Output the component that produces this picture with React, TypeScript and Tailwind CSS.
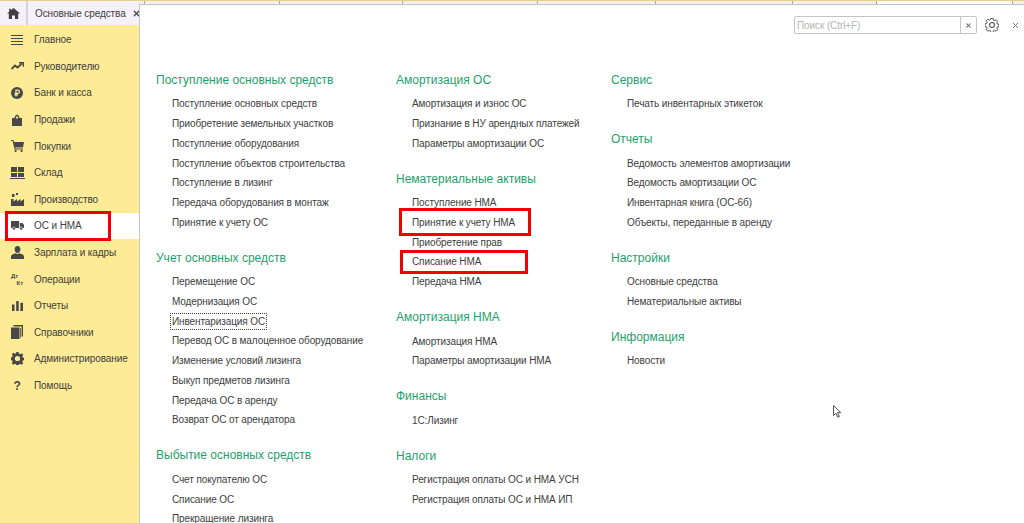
import { ReactNode } from "react";
import { X } from "lucide-react";

const iconColor = "#484848";

const GearPath =
  "M6.2 0h2.6l.4 2 1.3.6 1.8-1.1 1.8 1.8-1.1 1.8.6 1.3 2 .4v2.6l-2 .4-.6 1.3 1.1 1.8-1.8 1.8-1.8-1.1-1.3.6-.4 2H6.2l-.4-2-1.3-.6-1.8 1.1-1.8-1.8 1.1-1.8-.6-1.3-2-.4V6.2l2-.4.6-1.3-1.1-1.8 1.8-1.8 1.8 1.1 1.3-.6z";

const sideItems: { label: string; icon: ReactNode; active?: boolean }[] = [
  {
    label: "Главное",
    icon: (
      <svg width="12" height="10" viewBox="0 0 12 10" stroke={iconColor} strokeWidth="1">
        <path d="M0 .5h12M0 3.5h12M0 6.5h12M0 9.5h12" />
      </svg>
    ),
  },
  {
    label: "Руководителю",
    icon: (
      <svg width="13" height="8" viewBox="0 0 13 8" fill="none" stroke={iconColor} strokeWidth="1.8">
        <path d="M.5 7l3.5-3.5 2.5 2L11 1.5" />
        <path d="M8 .8h4.4v4" strokeWidth="1.4" />
      </svg>
    ),
  },
  {
    label: "Банк и касса",
    icon: (
      <svg width="12" height="12" viewBox="0 0 14 14">
        <circle cx="7" cy="7" r="7" fill={iconColor} />
        <path d="M5.8 11V3.6h2.1a1.9 1.9 0 0 1 0 3.9H4.2M4.2 9.2h4" fill="none" stroke="#feeb96" strokeWidth="1.4" />
      </svg>
    ),
  },
  {
    label: "Продажи",
    icon: (
      <svg width="10" height="12" viewBox="0 0 10 12">
        <path d="M0 4h2.4l1-2.5C3.8.4 6.2.4 6.6 1.5l1 2.5H10v8H0z" fill={iconColor} />
        <path d="M3.8 4.6l.7-2.4h1l.7 2.4z" fill="#feeb96" />
      </svg>
    ),
  },
  {
    label: "Покупки",
    icon: (
      <svg width="13" height="12" viewBox="0 0 13 12" fill={iconColor}>
        <path d="M0 0h2.4l.6 2H13l-1 5.5H4.2l.3 1H12v1H3.6L1.6 1H0z" />
        <circle cx="4.6" cy="10.9" r="1.1" />
        <circle cx="10.6" cy="10.9" r="1.1" />
      </svg>
    ),
  },
  {
    label: "Склад",
    icon: (
      <svg width="15" height="12" viewBox="0 0 15 12" fill={iconColor}>
        <rect x="1" y="0" width="6" height="5" />
        <rect x="8" y="0" width="6" height="5" />
        <rect x="1" y="6" width="6" height="4" />
        <rect x="8" y="6" width="6" height="4" />
        <rect x="0" y="11" width="15" height="1" />
      </svg>
    ),
  },
  {
    label: "Производство",
    icon: (
      <svg width="13" height="13" viewBox="0 0 13 13" fill={iconColor}>
        <path d="M0 13V6h2.5v2.5L6 6v2.5L9.5 6v2.5L13 6v7zM1 1h2.5v3H1zM5 0h2v2H5z" />
      </svg>
    ),
  },
  {
    label: "ОС и НМА",
    active: true,
    icon: (
      <svg width="13" height="9" viewBox="0 0 13 9" fill={iconColor}>
        <path d="M0 0h8.2v7H0zM9 2h2.4L13 4v3H9z" />
        <circle cx="3" cy="7.5" r="1.5" stroke="#fff" strokeWidth=".6" />
        <circle cx="10.2" cy="7.5" r="1.5" stroke="#fff" strokeWidth=".6" />
      </svg>
    ),
  },
  {
    label: "Зарплата и кадры",
    icon: (
      <svg width="13" height="13" viewBox="0 0 13 13" fill={iconColor}>
        <path d="M6.5 0C8.4 0 9.4 1.4 9.4 3.2S8.4 7 6.5 7 3.6 5 3.6 3.2 4.6 0 6.5 0zM4.6 7.2c1 .9 2.8.9 3.8 0 2 .7 4.6 1.2 4.6 3.4V13H0v-2.4c0-2.2 2.6-2.7 4.6-3.4z" />
      </svg>
    ),
  },
  {
    label: "Операции",
    icon: (
      <span className="relative block w-[12px] h-[13px] text-[6px] leading-none font-bold text-[#484848]">
        <span className="absolute left-0 top-0">Дт</span>
        <span className="absolute right-0 bottom-0">Кт</span>
      </span>
    ),
  },
  {
    label: "Отчеты",
    icon: (
      <svg width="11" height="10" viewBox="0 0 11 10" fill={iconColor}>
        <rect x="0" y="3.5" width="2.5" height="6.5" />
        <rect x="4.2" y="0" width="2.5" height="10" />
        <rect x="8.4" y="1.8" width="2.6" height="8.2" />
      </svg>
    ),
  },
  {
    label: "Справочники",
    icon: (
      <svg width="12" height="14" viewBox="0 0 12 14" fill={iconColor}>
        <rect x="0" y="2.5" width="8.5" height="11.5" />
        <path d="M2.5 1.6V0H12v11.5h-1.4V1.6zM9.2 3h.8v9.8h-.8z" />
      </svg>
    ),
  },
  {
    label: "Администрирование",
    icon: (
      <svg width="13" height="13" viewBox="0 0 15 15">
        <path d={GearPath} fill={iconColor} />
        <circle cx="7.5" cy="7.5" r="3" fill="#feeb96" />
      </svg>
    ),
  },
  { label: "Помощь", icon: <span className="text-[12px] font-bold text-[#484848] leading-none">?</span> },
];

type Section = { title: string; items: string[] };

const columns: { width: string; sections: Section[] }[] = [
  {
    width: "w-[240px]",
    sections: [
      {
        title: "Поступление основных средств",
        items: [
          "Поступление основных средств",
          "Приобретение земельных участков",
          "Поступление оборудования",
          "Поступление объектов строительства",
          "Поступление в лизинг",
          "Передача оборудования в монтаж",
          "Принятие к учету ОС",
        ],
      },
      {
        title: "Учет основных средств",
        items: [
          "Перемещение ОС",
          "Модернизация ОС",
          "Инвентаризация ОС",
          "Перевод ОС в малоценное оборудование",
          "Изменение условий лизинга",
          "Выкуп предметов лизинга",
          "Передача ОС в аренду",
          "Возврат ОС от арендатора",
        ],
      },
      {
        title: "Выбытие основных средств",
        items: ["Счет покупателю ОС", "Списание ОС", "Прекращение лизинга"],
      },
    ],
  },
  {
    width: "w-[215px]",
    sections: [
      {
        title: "Амортизация ОС",
        items: ["Амортизация и износ ОС", "Признание в НУ арендных платежей", "Параметры амортизации ОС"],
      },
      {
        title: "Нематериальные активы",
        items: ["Поступление НМА", "Принятие к учету НМА", "Приобретение прав", "Списание НМА", "Передача НМА"],
      },
      { title: "Амортизация НМА", items: ["Амортизация НМА", "Параметры амортизации НМА"] },
      { title: "Финансы", items: ["1С:Лизинг"] },
      { title: "Налоги", items: ["Регистрация оплаты ОС и НМА УСН", "Регистрация оплаты ОС и НМА ИП"] },
    ],
  },
  {
    width: "w-[240px]",
    sections: [
      { title: "Сервис", items: ["Печать инвентарных этикеток"] },
      {
        title: "Отчеты",
        items: [
          "Ведомость элементов амортизации",
          "Ведомость амортизации ОС",
          "Инвентарная книга (ОС-6б)",
          "Объекты, переданные в аренду",
        ],
      },
      { title: "Настройки", items: ["Основные средства", "Нематериальные активы"] },
      { title: "Информация", items: ["Новости"] },
    ],
  },
];

function LinkRow({ label }: { label: string }) {
  const focused = label === "Инвентаризация ОС";
  const marked = label === "Принятие к учету НМА" || label === "Списание НМА";
  return (
    <div className="relative h-[19.75px] flex items-center pl-4 whitespace-nowrap text-[#404040]">
      <span className={focused ? "outline-1 outline-dotted outline-[#404040] px-px -ml-px" : ""}>{label}</span>
      {marked && (
        <div
          className={
            label === "Списание НМА"
              ? "absolute left-[4px] top-[-2px] w-[128px] h-[24px] border-[3px] border-[#f00000]"
              : "absolute left-[3px] top-[-5px] w-[132px] h-[28px] border-[3px] border-[#f00000]"
          }
        />
      )}
    </div>
  );
}

const tabDividers = ["w-[6px]", "w-[135px]", "w-[123px]", "w-[135px]", "w-[118px]", "w-[137px]", "w-[84px]"];

export default function App() {
  return (
    <div className="w-[1024px] h-[523px] overflow-hidden flex flex-col bg-white text-[10px] tracking-[-0.1px] font-['Liberation_Sans',Arial,sans-serif] text-[#404040]">
      <div className="flex h-[25px] shrink-0">
        <div className="w-[139px] flex bg-[#f4f1f8] border-t border-[#e8cf8a]">
          <div className="w-[28px] flex items-center justify-center border-r-2 border-[#d4d4d4] shrink-0">
            <svg width="13" height="11" viewBox="0 0 13 11" fill="#3f3f3f">
              <path d="M6.5 0L13 5.6h-1.8V11H8V7.4H5V11H1.8V5.6H0L2.2 3.7V.8h1.6v1.5z" />
            </svg>
          </div>
          <div className="flex-1 flex items-center pl-[7px] min-w-0">
            <span className="whitespace-nowrap">Основные средства</span>
            <X size={9} strokeWidth={3.4} color="#484848" className="ml-[6px] shrink-0" />
          </div>
        </div>
        <div className="flex-1 flex flex-col">
          <div className="h-[5px] shrink-0 bg-[#f6efe4] border-t border-[#e8cf8a] border-b border-b-[#c4c4c4] flex">
            {tabDividers.map((w, i) => (
              <div key={i} className={`${w} border-r border-[#a8a8a8] shrink-0`} />
            ))}
            <div className="w-[136px] shrink-0 bg-white border-r border-[#a8a8a8]" />
          </div>
          <div className="flex-1 border-l border-[#c9c9c9]" />
        </div>
      </div>
      <div className="flex flex-1 min-h-0">
        <aside className="w-[140px] shrink-0 bg-[#feeb96] border-r border-[#c9c9c9] pt-[1.5px]">
          {sideItems.map((item) => (
            <div
              key={item.label}
              className={`relative h-[26.6px] flex items-center whitespace-nowrap ${item.active ? "bg-white" : ""}`}
            >
              <div className="w-[34px] flex justify-center shrink-0">{item.icon}</div>
              <span>{item.label}</span>
              {item.active && (
                <div className="absolute left-[5px] top-[-2px] w-[106px] h-[30px] border-[3px] border-[#f00000]" />
              )}
            </div>
          ))}
        </aside>
        <main className="relative flex-1 flex pl-[16px] pt-[45px] min-w-0">
          {columns.map((col) => (
            <div key={col.sections[0].title} className={`${col.width} shrink-0`}>
              {col.sections.map((section) => (
                <div key={section.title} className="mb-[15.6px]">
                  <div className="text-[12px] tracking-normal leading-[20px] text-[#1f9f6b] mb-[4px] whitespace-nowrap">
                    {section.title}
                  </div>
                  {section.items.map((item) => (
                    <LinkRow key={item} label={item} />
                  ))}
                </div>
              ))}
            </div>
          ))}
          <div className="absolute right-[4px] top-[-9px] flex items-center">
            <div className="w-[183px] h-[18px] flex border border-[#c4c4c4] rounded-[2px] text-[#b5b5b5]">
              <div className="flex-1 flex items-center pl-[2px]">Поиск (Ctrl+F)</div>
              <div className="w-[16px] flex items-center justify-center border-l border-[#c4c4c4]">
                <X size={7} strokeWidth={3.5} color="#5a5a5a" />
              </div>
            </div>
            <svg width="14" height="14" viewBox="0 0 15 15" className="ml-[8px]">
              <path d={GearPath} transform="translate(.5 .5) scale(.93)" fill="none" stroke="#484848" strokeWidth="1.1" />
              <circle cx="7.5" cy="7.5" r="2.6" fill="none" stroke="#484848" strokeWidth="1.1" />
            </svg>
            <X size={9} strokeWidth={2.2} color="#5a5a5a" className="ml-[12px]" />
          </div>
          <svg width="9" height="13" viewBox="0 0 9 13" className="absolute left-[693px] top-[380px]">
            <path d="M.5.5v10l2.5-2.3 1.8 4 1.6-.7-1.8-3.9h3.2z" fill="#ffffff" stroke="#555555" strokeWidth="1" />
          </svg>
        </main>
      </div>
    </div>
  );
}
